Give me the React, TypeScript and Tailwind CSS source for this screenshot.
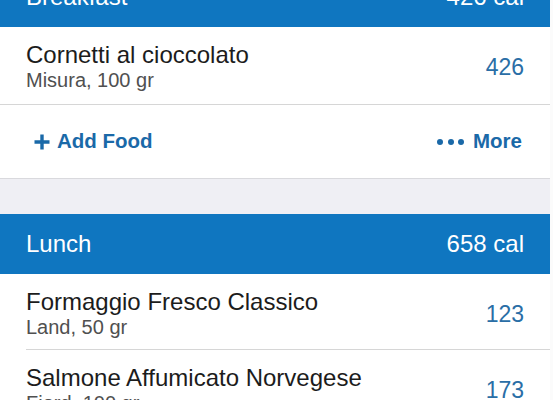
import React from 'react';

type Food = { name: string; detail: string; cal: number };

const breakfast: Food[] = [{ name: 'Cornetti al cioccolato', detail: 'Misura, 100 gr', cal: 426 }];
const lunch: Food[] = [
  { name: 'Formaggio Fresco Classico', detail: 'Land, 50 gr', cal: 123 },
  { name: 'Salmone Affumicato Norvegese', detail: 'Fjord, 100 gr', cal: 173 },
];

function MealHeader({ title, cal }: { title: string; cal: number }) {
  return (
    <div className="h-[60px] shrink-0 bg-[#0f76c0] px-[26px] flex items-center justify-between text-white text-[24px] leading-none">
      <span>{title}</span>
      <span>{cal} cal</span>
    </div>
  );
}

function FoodRow({ food, fullLine }: { food: Food; fullLine?: boolean }) {
  return (
    <div className={fullLine ? 'border-b border-[#d6d6d6]' : ''}>
      <div className={'ml-[26px] flex justify-between pr-[26px] ' + (fullLine ? 'h-[77px]' : 'h-[76px] border-b border-[#d6d6d6]')}>
        <div className="pt-[14px]">
          <div className="text-[24px] leading-[27px] text-[#1c1c1c]">{food.name}</div>
          <div className="text-[20px] leading-[24px] text-[#505050]">{food.detail}</div>
        </div>
        <div className="mt-[27px] text-[23px] leading-[26px] text-[#2a6ea6]">{food.cal}</div>
      </div>
    </div>
  );
}

function Actions() {
  return (
    <div className="h-[73px] flex items-center justify-between pl-[34px] pr-[28px] text-[#1a69a8] text-[20.5px] font-bold">
      <div className="flex items-center gap-[7px]">
        <svg width="16" height="16" viewBox="0 0 16 16">
          <path d="M8 0.5V15.5M0.5 8H15.5" stroke="#1a69a8" strokeWidth="3.4" />
        </svg>
        <span>Add Food</span>
      </div>
      <div className="flex items-center gap-[9px]">
        <div className="flex items-center gap-[4.5px]">
          <span className="w-[6px] h-[6px] rounded-full bg-[#1a69a8]" />
          <span className="w-[6px] h-[6px] rounded-full bg-[#1a69a8]" />
          <span className="w-[6px] h-[6px] rounded-full bg-[#1a69a8]" />
        </div>
        <span>More</span>
      </div>
    </div>
  );
}

export default function App() {
  return (
    <div className="w-[553px] h-[400px] overflow-hidden bg-[#fbfbfb]" style={{ fontFamily: '"Liberation Sans", Arial, sans-serif' }}>
      <div className="w-[550px] -mt-[33px] flex flex-col bg-white">
        <MealHeader title="Breakfast" cal={426} />
        {breakfast.map((f) => (
          <FoodRow key={f.name} food={f} fullLine />
        ))}
        <Actions />
        <div className="h-[36px] border-t border-[#d9d9dd] bg-[#efeff4]" />
        <MealHeader title="Lunch" cal={658} />
        {lunch.map((f) => (
          <FoodRow key={f.name} food={f} />
        ))}
      </div>
    </div>
  );
}
